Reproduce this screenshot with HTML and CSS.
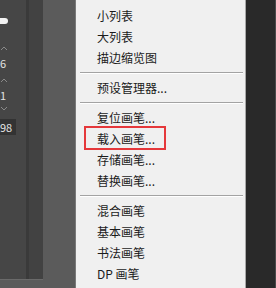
FILE: index.html
```html
<!DOCTYPE html>
<html lang="zh">
<head>
    <title>画笔面板菜单</title>
    <link rel="stylesheet" href="styles.css">
</head>
<body class="body">
    <div class="panel">
        <div class="values">
            <div class="knob"></div>
            <svg class="mark mark-first" width="8" height="12" viewBox="0 0 8 12"><path d="M1 8 L4 5 L7 8" fill="none" stroke="#8a8a8a" stroke-width="1"/></svg>
            <div class="num">6</div>
            <svg class="mark mark-second" width="8" height="12" viewBox="0 0 8 12"><path d="M1 8 L4 5 L7 8" fill="none" stroke="#8a8a8a" stroke-width="1"/></svg>
            <div class="num">1</div>
            <svg class="mark" width="8" height="10" viewBox="0 0 8 10"><path d="M1 4 L4 7 L7 4" fill="none" stroke="#8a8a8a" stroke-width="1"/></svg>
            <div class="num num-box">98</div>
        </div>
        <div class="strip"></div>
    </div>
    <div class="gap"></div>
    <ul class="menu">
        <li class="item">小列表</li>
        <li class="item">大列表</li>
        <li class="item">描边缩览图</li>
        <li class="sep"></li>
        <li class="item">预设管理器...</li>
        <li class="sep"></li>
        <li class="item">复位画笔...</li>
        <li class="item item-marked">载入画笔...<span class="highlight"></span></li>
        <li class="item">存储画笔...</li>
        <li class="item">替换画笔...</li>
        <li class="sep"></li>
        <li class="item">混合画笔</li>
        <li class="item">基本画笔</li>
        <li class="item">书法画笔</li>
        <li class="item">DP 画笔</li>
    </ul>
    <div class="dark"></div>
</body>
</html>
```

FILE: styles.css
```css
.body {
    margin: 0;
    width: 276px;
    height: 288px;
    overflow: hidden;
    display: flex;
    background: #5b5b5b;
    font-family: "Noto Sans CJK SC", "Noto Sans", sans-serif;
}

.panel {
    display: flex;
    width: 43px;
    height: 279px;
    border-bottom: 1px solid #6a6a6a;
}

.values {
    width: 26px;
    background: #464646;
    color: #e2e2e2;
    font-size: 11px;
    display: flex;
    flex-direction: column;
}

.knob {
    width: 8px;
    height: 6px;
    margin-top: 18px;
    border-radius: 0 4px 4px 0;
    background: #f2f2f2;
}

.mark {
    display: block;
    flex: none;
}

.mark-first {
    margin-top: 18px;
}

.mark-second {
    margin-top: 3px;
}

.num {
    height: 16px;
    line-height: 16px;
    margin-top: 1px;
}

.num-box {
    width: 16px;
    margin-top: 6px;
    background: #333333;
}

.strip {
    width: 17px;
    background: #424242;
    border-left: 3px solid #3a3a3a;
    box-sizing: border-box;
}

.gap {
    width: 32px;
    border-right: 1px solid #7a7a7a;
}

.menu {
    list-style: none;
    margin: 0;
    padding: 5px 0 0 0;
    width: 169px;
    background: #f0f0f0;
    border-right: 1px solid #a8a8a8;
    font-size: 12px;
    color: #1b1b1b;
}

.item {
    height: 21px;
    line-height: 21px;
    padding-left: 21px;
}

.item-marked {
    position: relative;
}

.highlight {
    position: absolute;
    left: 8px;
    top: -2px;
    width: 82px;
    height: 24px;
    box-sizing: border-box;
    border: 2px solid #e5383b;
}

.sep {
    height: 9px;
    margin: 0 2px 0 4px;
    display: flex;
    align-items: center;
}

.sep::before {
    content: "";
    flex: 1;
    border-top: 1px solid #a3a3a3;
    border-bottom: 1px solid #ffffff;
}

.dark {
    flex: 1;
    background: #292929;
    border-right: 1px solid #4a4a4a;
}
```
